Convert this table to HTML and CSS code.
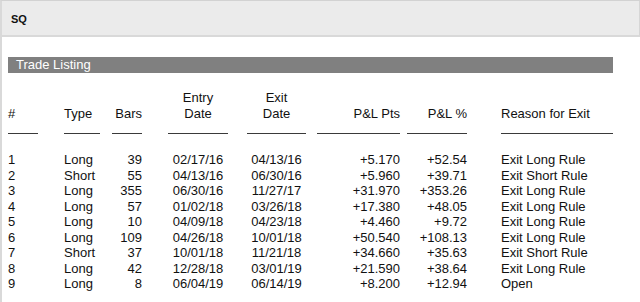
FILE: index.html
```html
<!DOCTYPE html>
<html>
<head>
<meta charset="utf-8">
<link rel="stylesheet" href="styles.css">
</head>
<body>
<div class="frame">
  <div class="titlebar"><span class="symbol">SQ</span></div>
  <div class="content">
    <div class="section">Trade Listing</div>
    <div class="row head">
      <div class="cell"><span>#</span></div>
      <div class="cell"><span>Type</span></div>
      <div class="cell"><span>Bars</span></div>
      <div class="cell"><span>Entry</span><span>Date</span></div>
      <div class="cell"><span>Exit</span><span>Date</span></div>
      <div class="cell"><span>P&amp;L Pts</span></div>
      <div class="cell"><span>P&amp;L %</span></div>
      <div class="cell"><span>Reason for Exit</span></div>
    </div>
    <div class="rows">
      <div class="row"><div>1</div><div>Long</div><div>39</div><div>02/17/16</div><div>04/13/16</div><div>+5.170</div><div>+52.54</div><div>Exit Long Rule</div></div>
      <div class="row"><div>2</div><div>Short</div><div>55</div><div>04/13/16</div><div>06/30/16</div><div>+5.960</div><div>+39.71</div><div>Exit Short Rule</div></div>
      <div class="row"><div>3</div><div>Long</div><div>355</div><div>06/30/16</div><div>11/27/17</div><div>+31.970</div><div>+353.26</div><div>Exit Long Rule</div></div>
      <div class="row"><div>4</div><div>Long</div><div>57</div><div>01/02/18</div><div>03/26/18</div><div>+17.380</div><div>+48.05</div><div>Exit Long Rule</div></div>
      <div class="row"><div>5</div><div>Long</div><div>10</div><div>04/09/18</div><div>04/23/18</div><div>+4.460</div><div>+9.72</div><div>Exit Long Rule</div></div>
      <div class="row"><div>6</div><div>Long</div><div>109</div><div>04/26/18</div><div>10/01/18</div><div>+50.540</div><div>+108.13</div><div>Exit Long Rule</div></div>
      <div class="row"><div>7</div><div>Short</div><div>37</div><div>10/01/18</div><div>11/21/18</div><div>+34.660</div><div>+35.63</div><div>Exit Short Rule</div></div>
      <div class="row"><div>8</div><div>Long</div><div>42</div><div>12/28/18</div><div>03/01/19</div><div>+21.590</div><div>+38.64</div><div>Exit Long Rule</div></div>
      <div class="row"><div>9</div><div>Long</div><div>8</div><div>06/04/19</div><div>06/14/19</div><div>+8.200</div><div>+12.94</div><div>Open</div></div>
    </div>
  </div>
</div>
</body>
</html>
```

FILE: styles.css
```css
* { box-sizing: border-box; }
html, body { margin: 0; padding: 0; background: #fff; }
body {
  font-family: "Liberation Sans", Arial, Helvetica, sans-serif;
  font-size: 13px;
  color: #111;
  width: 640px;
  height: 302px;
  overflow: hidden;
}
.frame {
  height: 302px;
  border-left: 2px solid #d9d9d9;
  border-top: 1px solid #d2d2d2;
}
.titlebar {
  height: 36px;
  background: #ebebeb;
  border-bottom: 2px solid #d9d9d9;
  border-right: 1px solid #d6d6d6;
  display: flex;
  align-items: center;
  padding-left: 9px;
  padding-top: 1px;
}
.symbol {
  font-size: 11px;
  font-weight: bold;
  color: #111;
}
.content {
  padding-left: 6px;
}
.section {
  margin-top: 20px;
  width: 605px;
  height: 16px;
  line-height: 16px;
  background: #808080;
  color: #fff;
  padding-left: 8px;
}
.row {
  display: grid;
  grid-template-columns: 30px 62px 42px 86px 78px 94px 67px 146px;
  width: 605px;
  line-height: 15.5px;
}
.row > :nth-child(2) { margin-left: 26px; }
.row > :nth-child(3) { margin-left: 12px; text-align: right; }
.row > :nth-child(4) { margin-left: 26px; text-align: center; }
.row > :nth-child(5) { margin-left: 19px; text-align: center; }
.row > :nth-child(6) { margin-left: 11px; text-align: right; }
.row > :nth-child(7) { margin-left: 7px; text-align: right; }
.row > :nth-child(8) { margin-left: 34px; }
.head {
  margin-top: 17px;
}
.head .cell {
  display: flex;
  flex-direction: column;
  justify-content: flex-end;
  padding-bottom: 12px;
  border-bottom: 1px solid #3a3a3a;
}
.rows {
  margin-top: 18px;
}
```
